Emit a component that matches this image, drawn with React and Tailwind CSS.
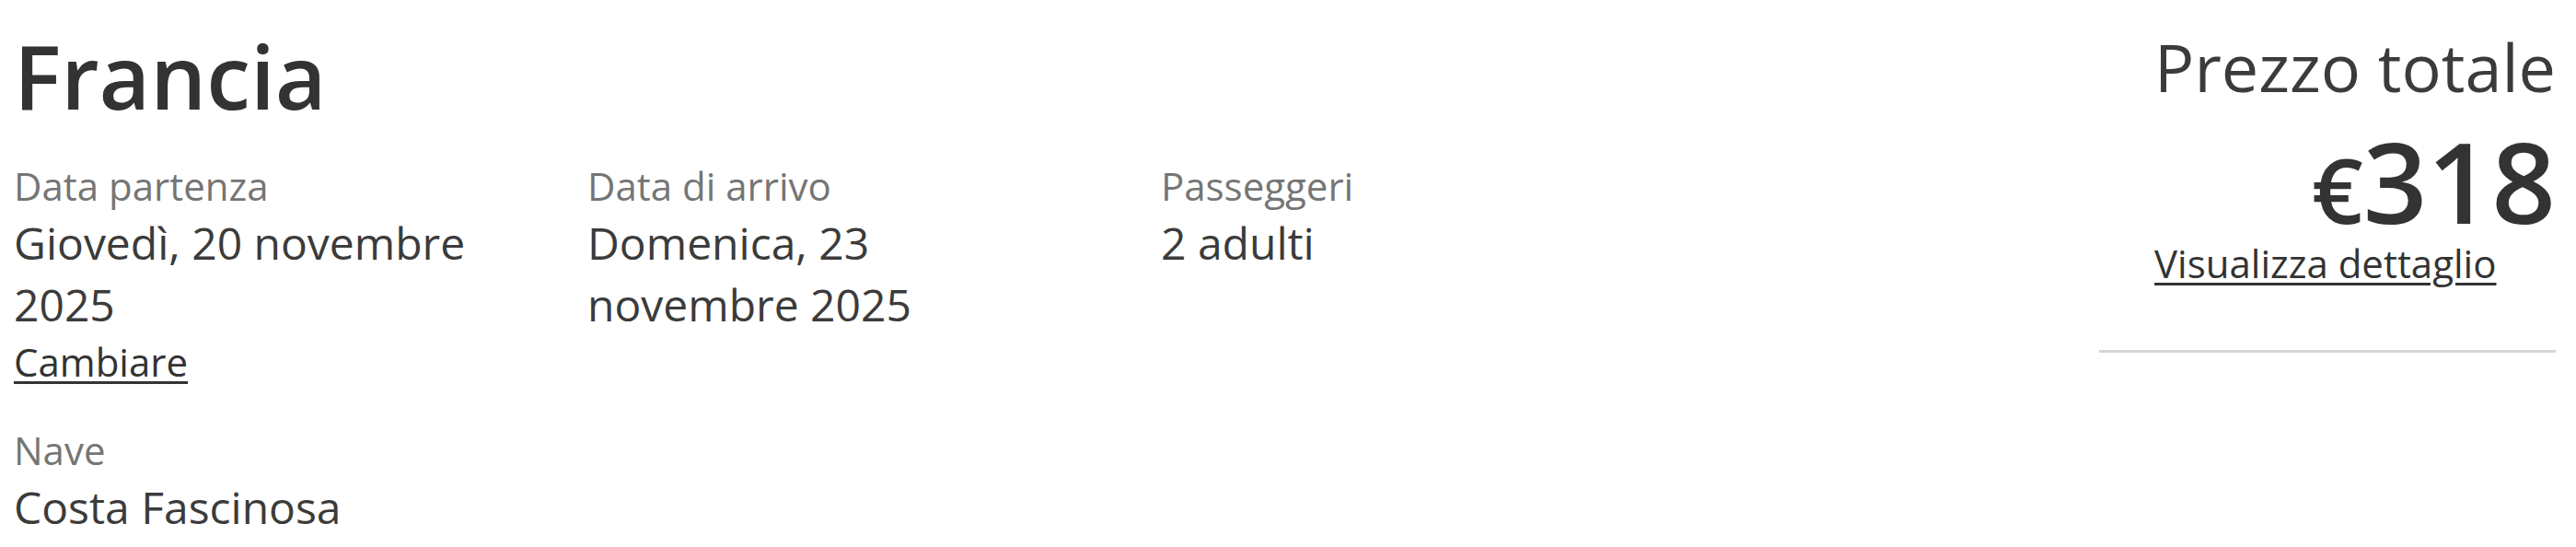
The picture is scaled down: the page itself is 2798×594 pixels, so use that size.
import React from "react";

const trip = {
  destination: "Francia",
  details: [
    { label: "Data partenza", value: "Giovedì, 20 novembre 2025", action: "Cambiare" },
    { label: "Data di arrivo", value: "Domenica, 23 novembre 2025" },
    { label: "Passeggeri", value: "2 adulti" },
    { label: "Nave", value: "Costa Fascinosa" },
  ],
  total: 318,
};

const Detail = ({ label, value, action }) => (
  <div>
    <p className="text-[42px] leading-[57px] text-[#757575]">{label}</p>
    <p className="text-[48px] leading-[67px] text-[#3b3b3b]">{value}</p>
    {action && (
      <a
        href="#"
        className="text-[42px] leading-[57px] text-[#333] underline decoration-[3px] underline-offset-[5px]"
      >
        {action}
      </a>
    )}
  </div>
);

const App = () => {
  return (
    <div className="flex justify-between bg-white pl-[15px] pr-[22px] pt-4 font-['Open_Sans',sans-serif]">
      <div>
        <h1 className="mb-[26px] text-[96px] leading-[131px] font-semibold text-[#333]">{trip.destination}</h1>
        <div className="grid grid-cols-[repeat(3,523px)] gap-x-[100px] gap-y-[39px]">
          {trip.details.map((d) => (
            <Detail key={d.label} {...d} />
          ))}
        </div>
      </div>

      <div className="flex w-[496px] flex-col items-end pt-2">
        <div className="w-fit">
          <p className="text-right text-[72px] leading-[97px] text-[#3b3b3b]">Prezzo totale</p>
          <p className="mt-[14px] text-right text-[122px] font-semibold leading-none text-[#333]">
            <span className="text-[98px]">€</span>
            {trip.total}
          </p>
          <a
            href="#"
            className="block text-[42px] leading-[57px] text-[#333] underline decoration-[3px] underline-offset-[5px]"
          >
            Visualizza dettaglio
          </a>
        </div>
        <div className="mt-[66px] h-[3px] w-full bg-[#d6d6d6]" />
      </div>
    </div>
  );
};

export default App;
